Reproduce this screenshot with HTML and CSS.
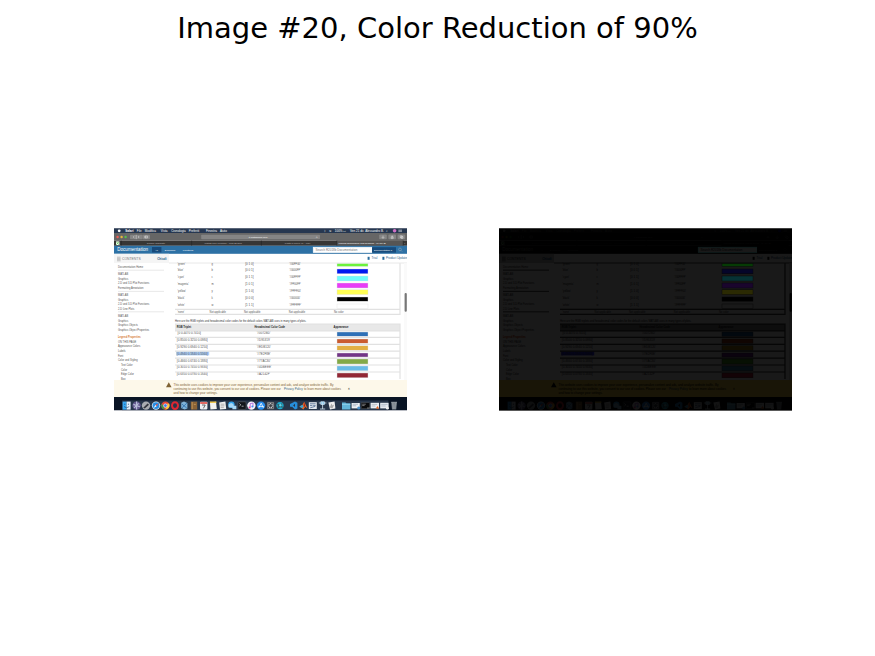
FILE: index.html
```html
<!DOCTYPE html>
<html lang="en">
<head>
<meta charset="utf-8">
<title>Image #20, Color Reduction of 90%</title>
<link rel="stylesheet" href="styles.css">
</head>
<body>
<h1 class="title">Image #20, Color Reduction of 90%</h1>
<main class="plots">
<figure class="plot full">
<svg viewBox="0 0 1465 915" role="img" aria-label="Original desktop">
<defs>
<g id="desktop">
<rect class="page" width="1465" height="915"/>
<!-- menu bar -->
<rect class="menubar" width="1465" height="26"/>
<g class="menu">
<circle cx="26" cy="14" r="7" class="light"/>
<text class="bold" x="56" y="19">Safari</text><text x="114" y="19">File</text><text x="154" y="19">Modifica</text><text x="234" y="19">Vista</text><text x="286" y="19">Cronologia</text><text x="374" y="19">Preferiti</text><text x="460" y="19">Finestra</text><text x="530" y="19">Aiuto</text>
<text x="1050" y="19">ᛒ</text><text x="1076" y="19">≋</text><text x="1104" y="19">100% ▭</text><text x="1180" y="19">Ven 21 dic</text><text x="1256" y="19">Alessandro B.</text><text x="1362" y="19">⌕</text>
<circle cx="1403" cy="14" r="9" class="siri"/><path class="line-light" d="M1422 10h18M1422 14h18M1422 18h18"/>
</g>
<!-- browser window -->
<rect class="toolbar" y="25" width="1465" height="38"/>
<circle class="red" cx="18" cy="45" r="6"/><circle class="amber" cx="38" cy="45" r="6"/><circle class="lime" cx="58" cy="45" r="6"/>
<rect class="field" x="80" y="34" width="62" height="22" rx="4"/><path class="line-light" d="M102 40l-6 5 6 5M120 40l6 5-6 5M111 34v22"/>
<rect class="field" x="142" y="34" width="38" height="22" rx="4"/><path class="line-light" d="M154 40h14v10h-14zM159 40v10"/>
<rect class="field" x="436" y="34" width="594" height="22" rx="4"/>
<text class="small white" x="674" y="50">it.mathworks.com</text><text class="small white" x="1012" y="50">⟳</text>
<rect class="field" x="1326" y="33" width="38" height="23" rx="4"/><rect class="field" x="1372" y="33" width="38" height="23" rx="4"/><rect class="field" x="1418" y="33" width="38" height="23" rx="4"/>
<path class="line-light" d="M1345 38v13M1339 46l6 6 6-6M1386 44h10v9h-10zM1391 50V37M1431 39h10v9h-10zM1435 43h10v9h-10z"/>
<rect class="tabs" y="63" width="1465" height="26"/>
<rect class="tab-on" x="1114" y="63" width="332" height="26"/>
<path class="tab-line" d="M36 63v26M388 63v26M737 63v26M1114 63v26M1446 63v26"/>
<rect class="icon-white" x="10" y="67" width="17" height="18"/><path class="excel" d="M11 69l14 14M25 69L11 83"/>
<text class="small pale" x="164" y="80">Google Translate</text><text class="small pale" x="452" y="80">Matlab Line Function - Web Search</text><text class="small pale" x="854" y="80">Posta in arrivo (1) - Mail</text><text class="small white" x="1122" y="80">Legend appearance and behavior - MATLAB</text><text class="small white" x="1450" y="80">+</text>
<rect class="header" y="89" width="1465" height="40"/>
<text class="brand" x="16" y="117">Documentation</text>
<rect class="navy" x="190" y="95" width="47" height="27"/><text class="small white" x="206" y="114">All</text><text class="small white" x="254" y="114">Examples</text><text class="small white" x="344" y="114">Functions</text>
<rect class="search" x="996" y="96" width="294" height="27"/><text class="entry grey" x="1008" y="115">Search R2018b Documentation</text>
<rect class="navy" x="1290" y="96" width="120" height="27"/><text class="small white" x="1300" y="114">Documentation ▾</text>
<circle class="ring" cx="1430" cy="107" r="7"/><path class="ring" d="M1435 112l6 6"/>
<!-- side navigation -->
<rect class="side-head" y="129" width="275" height="46"/>
<path class="grey-line" d="M15 146h18M15 152h18M15 158h18M15 164h18"/><text class="contents" x="40" y="160">CONTENTS</text><text class="entry link bold" x="216" y="159">Chiudi</text>
<path class="rule" d="M275 175h1190"/>
<rect class="book" x="1268" y="144" width="10" height="15"/><text class="entry link" x="1288" y="157">Trial</text>
<rect class="book" x="1342" y="144" width="10" height="15"/><text class="entry link" x="1360" y="157">Product Updates</text>
<g class="side">
<text x="20" y="198">Documentation Home</text>
<path class="rule" d="M20 211h230M20 317h230M20 419h230"/>
<text x="20" y="234">MATLAB</text><text x="20" y="258">Graphics</text><text x="20" y="281">2-D and 3-D Plot Functions</text><text x="20" y="303">Formatting Annotation</text>
<text x="20" y="340">MATLAB</text><text x="20" y="363">Graphics</text><text x="20" y="386">2-D and 3-D Plot Functions</text><text x="20" y="408">2-D Line Plots</text>
<text x="20" y="445">MATLAB</text><text x="20" y="468">Graphics</text><text x="20" y="491">Graphics Objects</text><text x="20" y="513">Graphics Object Properties</text>
<text class="orange bold" x="20" y="551">Legend Properties</text>
<text x="20" y="575">ON THIS PAGE</text><text x="20" y="597">Appearance Colors</text><text x="20" y="621">Labels</text><text x="20" y="644">Font</text><text x="20" y="667">Color and Styling</text>
<text x="35" y="689">Text Color</text><text x="35" y="714">Color</text><text x="35" y="737">Edge Color</text><text x="35" y="759">Box</text>
</g>
<!-- named colors -->
<g>
<text x="318" y="185">'green'</text><text x="488" y="185">g</text><text class="entry" x="656" y="185">[0 1 0]</text><text x="876" y="185">'#00FF00'</text>
<text x="318" y="215">'blue'</text><text x="488" y="215">b</text><text class="entry" x="656" y="215">[0 0 1]</text><text x="876" y="215">'#0000FF'</text>
<text x="318" y="250">'cyan'</text><text x="488" y="250">c</text><text class="entry" x="656" y="250">[0 1 1]</text><text x="876" y="250">'#00FFFF'</text>
<text x="318" y="285">'magenta'</text><text x="488" y="285">m</text><text class="entry" x="656" y="285">[1 0 1]</text><text x="876" y="285">'#FF00FF'</text>
<text x="318" y="319">'yellow'</text><text x="488" y="319">y</text><text class="entry" x="656" y="319">[1 1 0]</text><text x="876" y="319">'#FFFF00'</text>
<text x="318" y="354">'black'</text><text x="488" y="354">k</text><text class="entry" x="656" y="354">[0 0 0]</text><text x="876" y="354">'#000000'</text>
<text x="318" y="389">'white'</text><text x="488" y="389">w</text><text class="entry" x="656" y="389">[1 1 1]</text><text x="876" y="389">'#FFFFFF'</text>
<text x="318" y="424">'none'</text><text x="478" y="424">Not applicable</text><text x="650" y="424">Not applicable</text><text x="874" y="424">Not applicable</text><text x="1100" y="424">No color</text>
</g>
<rect class="swatch green" x="1115" y="178" width="155" height="14"/><rect class="swatch blue" x="1115" y="205" width="155" height="24"/><rect class="swatch cyan" x="1115" y="240" width="155" height="25"/><rect class="swatch magenta" x="1115" y="275" width="155" height="25"/><rect class="swatch yellow" x="1115" y="309" width="155" height="24"/><rect class="swatch black" x="1115" y="345" width="155" height="21"/><rect class="swatch blank" x="1115" y="380" width="155" height="22"/>
<path class="frame" d="M305 407h1125M305 432h1125V176"/>
<text class="dark" x="305" y="468">Here are the RGB triplets and hexadecimal color codes for the default colors MATLAB uses in many types of plots.</text>
<!-- default colors -->
<rect class="table-head" x="305" y="481" width="1125" height="33"/>
<text class="caption bold" x="314" y="502">RGB Triplet</text><text class="caption bold" x="702" y="502">Hexadecimal Color Code</text><text class="caption bold" x="1098" y="502">Appearance</text>
<rect class="selection" x="311" y="617" width="165" height="20"/>
<g class="entry">
<text x="318" y="529">[0 0.4470 0.7410]</text><text x="714" y="529">'#0072BD'</text>
<text x="314" y="564">[0.8500 0.3250 0.0980]</text><text x="714" y="564">'#D95319'</text>
<text x="314" y="599">[0.9290 0.6940 0.1250]</text><text x="714" y="599">'#EDB120'</text>
<text x="314" y="633">[0.4940 0.1840 0.5560]</text><text x="714" y="633">'#7E2F8E'</text>
<text x="314" y="668">[0.4660 0.6740 0.1880]</text><text x="714" y="668">'#77AC30'</text>
<text x="314" y="702">[0.3010 0.7450 0.9330]</text><text x="714" y="702">'#4DBEEE'</text>
<text x="314" y="736">[0.6350 0.0780 0.1840]</text><text x="714" y="736">'#A2142F'</text>
</g>
<rect class="swatch c1" x="1115" y="520" width="155" height="21"/><rect class="swatch c2" x="1115" y="555" width="155" height="21"/><rect class="swatch c3" x="1115" y="589" width="155" height="22"/><rect class="swatch c4" x="1115" y="625" width="155" height="20"/><rect class="swatch c5" x="1115" y="655" width="155" height="25"/><rect class="swatch c6" x="1115" y="690" width="155" height="24"/><rect class="swatch c7" x="1115" y="725" width="155" height="24"/>
<path class="frame" d="M305 481h1125v274M305 514h1125M305 547h1125M305 582h1125M305 616h1125M305 651h1125M305 685h1125M305 720h1125"/>
<rect class="track" x="1450" y="176" width="15" height="584"/><rect class="thumb" x="1453" y="325" width="11" height="94" rx="5"/>
<!-- cookie notice -->
<rect class="notice" y="760" width="1465" height="86"/>
<path class="brown" d="M260 796l14-25 14 25z"/>
<g class="notice-text">
<text x="298" y="788">This website uses cookies to improve your user experience, personalize content and ads, and analyze website traffic. By</text>
<text x="298" y="808">continuing to use this website, you consent to our use of cookies. Please see our</text><text class="link" x="850" y="808">Privacy Policy</text><text x="950" y="808">to learn more about cookies</text>
<text x="298" y="828">and how to change your settings.</text><text class="dark bold" x="1170" y="808">×</text>
</g>
<!-- dock -->
<rect class="desk" y="845" width="1465" height="66"/><rect class="dock" x="40" y="862" width="1332" height="49"/>
<path class="edge-line" d="M0 1h1465M0 913h1465"/>
<g class="icons">
<rect x="43" y="868" width="20" height="40" fill="#38a8f4"/><rect x="63" y="868" width="20" height="40" fill="#e4effa"/><path d="M50 893q13 12 26 0M54 878v7M72 878v7" fill="none" stroke="#173c68" stroke-width="3"/>
<circle cx="113" cy="888" r="21" fill="#665b90"/><path d="M97 882l32 12M101 899l22-22M113 868v40" stroke="#b9bdd9" stroke-width="6"/>
<circle cx="160" cy="888" r="21" fill="#a9adb1"/><path d="M146 899l22-22 7 7-21 19z" fill="#34383f"/>
<circle cx="210" cy="888" r="21" fill="#d9e8f2"/><circle cx="210" cy="888" r="17" fill="#268de4"/><path d="M222 876l-9 15-6-6z" fill="#f14e3e"/><path d="M198 900l9-15 6 6z" fill="#fff"/>
<circle cx="257" cy="888" r="21" fill="#e74535"/><path d="M239 877l15 31a21 21 0 0 1-15-31z" fill="#30a64c"/><path d="M256 908l12-20-2-10 10 1a21 21 0 0 1-20 29z" fill="#f8cf3c"/><circle cx="257" cy="888" r="9" fill="#3b7ee8" stroke="#fff" stroke-width="3"/>
<ellipse cx="305" cy="888" rx="15" ry="17" fill="none" stroke="#df2732" stroke-width="10"/>
<path d="M336 874l14-6 17 7v28l-14 5-17-8z" fill="#7fb2d9"/><path d="M339 880l25 20M364 876l-25 24" stroke="#3b79b4" stroke-width="5"/>
<rect x="384" y="868" width="32" height="40" fill="#8b6336"/><path d="M391 870v36M399 882h10" stroke="#c89b60" stroke-width="4"/>
<rect x="430" y="869" width="37" height="38" rx="4" fill="#edeff3"/><path d="M431 875h35" stroke="#df4940" stroke-width="8"/><path d="M440 885h16l-9 17" fill="none" stroke="#444" stroke-width="4"/>
<path d="M480 872l30-3 4 36-32 3z" fill="#f3f3ef"/><path d="M480 871h32" stroke="#f0c441" stroke-width="7"/>
<path d="M526 873l31-5 4 37-31 3z" fill="#eee"/><path d="M533 881h19M533 889h19M533 897h16" stroke="#908c8c" stroke-width="3"/>
<circle cx="587" cy="884" r="16" fill="#34a4ed"/><path d="M573 883q14-16 25 0v15h-25zM592 889h20v17h-20z" fill="#a8d8f5"/>
<rect x="620" y="869" width="40" height="38" rx="5" fill="#11151a" stroke="#777" stroke-width="2"/><path d="M627 878l7 6-7 6M638 891h10" fill="none" stroke="#fff" stroke-width="3"/>
<circle cx="687" cy="888" r="21" fill="#f7f4fb"/><path d="M681 897v-19l14-3v18" fill="none" stroke="#a259db" stroke-width="4"/><circle cx="678" cy="897" r="5" fill="#ec4d95"/><circle cx="692" cy="893" r="5" fill="#4095ee"/>
<circle cx="735" cy="888" r="21" fill="#278def"/><path d="M724 899l12-23 11 23M722 893h27" fill="none" stroke="#fff" stroke-width="4"/>
<rect x="764" y="869" width="38" height="38" rx="5" fill="#3c3e44"/><circle cx="783" cy="888" r="10" fill="none" stroke="#c4c7cd" stroke-width="7" stroke-dasharray="5 3"/><path d="M768 873h30v30h-30z" fill="none" stroke="#aaa" stroke-width="3"/>
<circle cx="830" cy="888" r="18" fill="#1cadd0"/><path d="M813 876l17 6 13-8-3 14 7 12-16-4-14 8 2-16z" fill="#2d6574"/><circle cx="832" cy="886" r="6" fill="#6ccfe0"/>
<path d="M880 880l25-12 12 6v29l-12 5-25-24 5-5 20 16v-16l-20 17-5-5z" fill="#278edb"/>
<path d="M927 892l16-8 8-15 17 33-12-8-9 13z" fill="#e96825"/><path d="M927 892l16-8 5 8-8 9z" fill="#36a6d2"/><path d="M951 869l-3 24 8 1z" fill="#9f241c"/>
<rect x="974" y="871" width="40" height="34" fill="#e4e9ee"/><path d="M980 879h28M980 888h12M996 888h12M981 899l25-7" stroke="#48648b" stroke-width="4"/>
<path d="M1024 875h38M1043 871v34M1030 905h26M1034 869h18v13h-18z" fill="#41aeed" stroke="#d4e7f2" stroke-width="4"/>
<path d="M1072 872l31-4 4 35-27 5z" fill="#eee"/><path d="M1079 898l8-20 6 9 8-4-9 19z" fill="#aaa"/>
<path d="M1140 872h17l5 4h20v31h-42z" fill="#63b6d9"/><path d="M1140 882h42" stroke="#a9def3" stroke-width="3"/>
<rect x="1188" y="875" width="41" height="27" fill="#edf1f5"/><path d="M1193 881h27M1193 889h18" stroke="#8594a9" stroke-width="3"/><circle cx="1224" cy="900" r="8" fill="#4d93cc"/>
<rect x="1236" y="874" width="42" height="29" fill="#090a0c" stroke="#555" stroke-width="2"/><path d="M1241 881h18M1241 888h12M1265 900h14" stroke="#bbb" stroke-width="3"/>
<rect x="1283" y="874" width="42" height="28" fill="#eceff3"/><path d="M1288 882h28M1288 890h19" stroke="#a0a5ad" stroke-width="3"/><path d="M1309 902l9-12 8 14z" fill="#e96825"/>
<rect x="1331" y="874" width="42" height="28" fill="#e5eaf0"/><path d="M1336 882h32M1336 890h22" stroke="#97a4b5" stroke-width="3"/><circle cx="1367" cy="901" r="7" fill="#eee"/>
<path d="M1386 870h29l-4 38h-21z" fill="#7c858d"/><path d="M1394 874l3 31M1407 874l-3 31M1386 871h29" stroke="#a1a8af" stroke-width="3"/>
</g>
</g>
</defs>
<use href="#desktop"/>
</svg>
</figure>
<figure class="plot reduced">
<svg viewBox="0 0 1465 915" role="img" aria-label="Desktop with reduced color"><use href="#desktop"/></svg>
</figure>
</main>
</body>
</html>
```
FILE: styles.css
```css
body {
  margin: 0;
  background: #fff;
  color: #000;
  font-family: "DejaVu Sans", sans-serif;
}

.title {
  margin: 0;
  padding-top: 10px;
  font-size: 29px;
  line-height: 36px;
  font-weight: 400;
  text-align: center;
}

.plots {
  display: grid;
  grid-template-columns: 114fr 293fr 92fr 293fr 83fr;
  margin-top: 182px;
}

.plot {
  margin: 0;
  grid-column: 2;
}

.reduced {
  grid-column: 4;
}

.plot svg {
  display: block;
  width: 100%;
  height: auto;
  font-family: "Liberation Sans", Arial, sans-serif;
  font-size: 13px;
}

.full {
  --page: #fff; --ink: #555; --dark: #333; --caption: #222; --grey: #777; --rule: #e2e2e2;
  --menubar: #263750; --toolbar: #666; --field: #858585; --tabs: #373635;
  --tab-on: #565554; --tab-line: #222; --pale: #bbb; --white: #fff;
  --header: #2d71a5; --navy: #174a7b; --search: #fff; --search-edge: #fff;
  --side-head: #f5f5f5; --link: #2d6387; --book: #286b9c; --orange: #d77a32;
  --frame: #e1e1e1; --head: #e8e8e8; --selection: #aaccf5;
  --track: #fafafa; --thumb: #777; --notice: #fdf8ea; --brown: #806334;
  --desk: #091424; --dock: #27364a; --edge: #a7abb5;
  --red: #ef5c53; --amber: #e7b73c; --lime: #59bd4b; --siri: #cf71c4;
  --green: #6cf23c; --blue: #0018f0; --cyan: #70fbfd; --magenta: #e83cf7;
  --yellow: #fffe54; --black: #000; --blank: #fff; --icons: 1;
  --c1: #2e70b7; --c2: #ca5b30; --c3: #e2af43; --c4: #733687;
  --c5: #83a947; --c6: #69bbe6; --c7: #922735;
}

.reduced {
  --page: #191919; --ink: #040404; --dark: #020202; --caption: #020202; --grey: #020202; --rule: #040404;
  --menubar: #010101; --toolbar: #000; --field: #000; --tabs: #000;
  --tab-on: #000; --tab-line: #000; --pale: #050505; --white: #0a0a0a;
  --header: #000; --navy: #000; --search: #191919; --search-edge: #0c1e1e;
  --side-head: #131313; --link: #00060b; --book: #000; --orange: #160500;
  --frame: #060606; --head: #0d0d0d; --selection: #05051a;
  --track: #151515; --thumb: #000; --notice: #191507; --brown: #000;
  --desk: #000; --dock: #000; --edge: #999;
  --red: #080000; --amber: #060600; --lime: #000600; --siri: #000009;
  --green: #063b05; --blue: #050529; --cyan: #073235; --magenta: #1a052d;
  --yellow: #2b2a03; --black: #000; --blank: #191919; --icons: 0.08;
  --c1: #02080e; --c2: #100502; --c3: #110d02; --c4: #0b030e;
  --c5: #071003; --c6: #050d11; --c7: #130306;
}

#desktop { fill: var(--ink); }
.page { fill: var(--page); }
.bold { font-weight: 700; }
.small { font-size: 12px; }
.entry { font-size: 15px; }
.dark { fill: var(--dark); }
.caption { fill: var(--caption); }
.grey { fill: var(--grey); }
.pale { fill: var(--pale); }
.white, .light { fill: var(--white); }
.menu { fill: var(--white); font-size: 15px; }
.menubar { fill: var(--menubar); }
.toolbar { fill: var(--toolbar); }
.field { fill: var(--field); }
.tabs { fill: var(--tabs); }
.tab-on { fill: var(--tab-on); }
.tab-line { stroke: var(--tab-line); stroke-width: 3px; }
.line-light { fill: none; stroke: var(--white); stroke-width: 2px; }
.siri { fill: var(--siri); }
.red { fill: var(--red); }
.amber { fill: var(--amber); }
.lime { fill: var(--lime); }
.icon-white { fill: var(--white); }
.excel { stroke: var(--lime); stroke-width: 4px; }
.header { fill: var(--header); }
.brand { fill: var(--white); font-size: 23px; }
.navy { fill: var(--navy); }
.search { fill: var(--search); stroke: var(--search-edge); stroke-width: 3px; }
.ring { fill: none; stroke: var(--pale); stroke-width: 2px; }
.side-head { fill: var(--side-head); }
.contents { fill: var(--grey); font-size: 17px; }
.grey-line { stroke: var(--grey); stroke-width: 2px; }
.rule { stroke: var(--rule); stroke-width: 4px; }
.link { fill: var(--link); }
.book { fill: var(--book); }
.orange { fill: var(--orange); }
.frame { fill: none; stroke: var(--frame); stroke-width: 6px; }
.table-head { fill: var(--head); }
.selection { fill: var(--selection); }
.swatch { stroke: var(--frame); stroke-width: 2px; }
.green { fill: var(--green); }
.blue { fill: var(--blue); }
.cyan { fill: var(--cyan); }
.magenta { fill: var(--magenta); }
.yellow { fill: var(--yellow); }
.black { fill: var(--black); }
.blank { fill: var(--blank); }
.c1 { fill: var(--c1); }
.c2 { fill: var(--c2); }
.c3 { fill: var(--c3); }
.c4 { fill: var(--c4); }
.c5 { fill: var(--c5); }
.c6 { fill: var(--c6); }
.c7 { fill: var(--c7); }
.track { fill: var(--track); }
.thumb { fill: var(--thumb); }
.notice { fill: var(--notice); }
.notice-text { font-size: 15px; }
.notice-text, .brown { fill: var(--brown); }
.desk { fill: var(--desk); }
.dock { fill: var(--dock); }
.edge-line { stroke: var(--edge); stroke-width: 3px; }
.icons { opacity: var(--icons); }
```
